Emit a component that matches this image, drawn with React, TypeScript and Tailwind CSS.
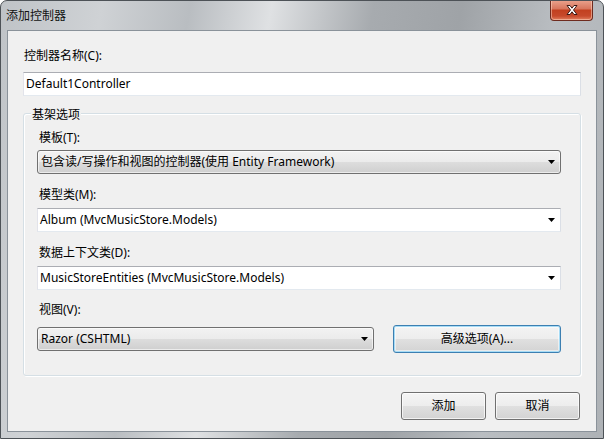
const font = "font-['Noto_Sans','Noto_Sans_CJK_SC',sans-serif]";

function Arrow() {
  return (
    <svg width="7" height="4" viewBox="0 0 7 4" className="shrink-0">
      <path d="M0 0H7L3.5 4Z" fill="#000" />
    </svg>
  );
}

function ButtonCombo({ text, className }: { text: string; className: string }) {
  return (
    <div
      className={`flex h-[24px] items-center justify-between rounded-[3px] border border-[#707070] bg-[linear-gradient(180deg,#f2f2f2_0%,#ebebeb_50%,#dddddd_50%,#cfcfcf_100%)] pl-[3px] pr-[5px] shadow-[inset_0_0_0_1px_rgba(255,255,255,0.6)] ${className}`}
    >
      <span className="leading-[16px]">{text}</span>
      <Arrow />
    </div>
  );
}

function EditCombo({ text }: { text: string }) {
  return (
    <div className="flex h-[24px] w-[524px] items-center justify-between border border-[#e3e9ef] border-t-[#abadb3] border-l-[#e2e3ea] border-r-[#dbdfe6] bg-white pl-[2px] pr-[5px]">
      <span className="leading-[16px]">{text}</span>
      <Arrow />
    </div>
  );
}

function PushButton({ text, className, focused }: { text: string; className: string; focused?: boolean }) {
  return (
    <div
      className={`flex items-center justify-center rounded-[3px] border bg-[linear-gradient(180deg,#f4f4f4_0%,#ededed_50%,#e0e0e0_50%,#d3d3d3_100%)] leading-[16px] ${
        focused
          ? "border-[#3c7fb1] shadow-[inset_0_0_0_1px_#a7dcf6,inset_0_0_0_2px_rgba(255,255,255,0.5)]"
          : "border-[#707070] shadow-[inset_0_0_0_1px_rgba(255,255,255,0.7)]"
      } ${className}`}
    >
      {text}
    </div>
  );
}

function Label({ text, className }: { text: string; className: string }) {
  return <div className={`leading-[16px] ${className}`}>{text}</div>;
}

export default function App() {
  return (
    <div
      className={`${font} flex h-[439px] w-[604px] flex-col overflow-hidden rounded-t-[7px] border border-[#4d5257] bg-[linear-gradient(100deg,#bfc3c7_0%,#cfd2d5_15%,#b9bdc1_28%,#dfe1e3_40%,#a7abaf_55%,#9fa3a7_68%,#b9bdc1_82%,#aeb2b6_100%)] text-[12px] text-black`}
    >
      <div className="relative flex h-[29px] shrink-0 items-center pl-[5px] text-[12px] text-[#111]">
        <span className="leading-[16px]">添加控制器</span>
        <div className="absolute right-[10px] top-[-1px] flex h-[21px] w-[43px] items-center justify-center rounded-b-[4px] border border-t-0 border-[#6e2b1f] bg-[linear-gradient(180deg,#eba48f_0%,#d7755c_45%,#c2401f_50%,#c74a2b_80%,#e27f5f_100%)] shadow-[inset_0_0_0_1px_rgba(255,220,200,0.5)]">
          <svg width="14" height="12" viewBox="0 0 14 12">
            <path
              d="M2 1.5L5.5 6L2 10.5H5L7 7.8L9 10.5H12L8.5 6L12 1.5H9L7 4.2L5 1.5Z"
              fill="#fff"
              stroke="#3d1a14"
              strokeWidth="1"
              strokeLinejoin="round"
            />
          </svg>
        </div>
      </div>

      <div className="mx-[6px] mb-[6px] flex flex-1 flex-col border border-[#8a929a] bg-[#f0f0f0] px-[15px]">
        <Label text="控制器名称(C):" className="ml-[1px] mt-[17px]" />
        <div className="mt-[8px] flex h-[24px] w-[558px] items-center border border-[#e3e9ef] border-t-[#abadb3] border-l-[#e2e3ea] border-r-[#dbdfe6] bg-white pl-[2px]">
          <span className="leading-[16px]">Default1Controller</span>
        </div>

        <div className="relative mt-[17px] h-[263px] w-[558px] rounded-[3px] border border-[#d5dfe5] pl-[13px] shadow-[inset_1px_1px_0_#fff,1px_1px_0_#fff]">
          <span className="absolute left-[7px] top-[-7px] bg-[#f0f0f0] px-[1px] leading-[16px]">基架选项</span>
          <Label text="模板(T):" className="ml-[2px] mt-[16px]" />
          <ButtonCombo text="包含读/写操作和视图的控制器(使用 Entity Framework)" className="mt-[4px] w-[524px]" />
          <Label text="模型类(M):" className="ml-[2px] mt-[13px]" />
          <div className="mt-[5px]">
            <EditCombo text="Album (MvcMusicStore.Models)" />
          </div>
          <Label text="数据上下文类(D):" className="ml-[2px] mt-[13px]" />
          <div className="mt-[5px]">
            <EditCombo text="MusicStoreEntities (MvcMusicStore.Models)" />
          </div>
          <Label text="视图(V):" className="ml-[2px] mt-[12px]" />
          <div className="mt-[7px] flex w-[524px] items-center gap-[19px]">
            <ButtonCombo text="Razor (CSHTML)" className="w-[337px]" />
            <PushButton text="高级选项(A)..." className="h-[28px] w-[168px]" focused />
          </div>
        </div>

        <div className="mt-[16px] flex justify-end gap-[9px] pr-[1px]">
          <PushButton text="添加" className="h-[28px] w-[85px]" />
          <PushButton text="取消" className="h-[28px] w-[85px]" />
        </div>
      </div>
    </div>
  );
}
